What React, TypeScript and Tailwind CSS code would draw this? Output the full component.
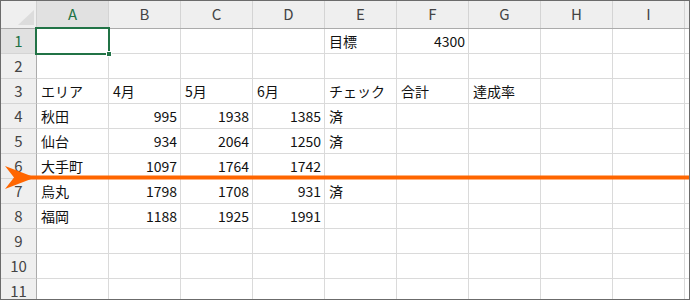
import React from "react";

const COLS = ["A", "B", "C", "D", "E", "F", "G", "H", "I"];

type Cell = { v: string; num?: boolean };

const DATA: Record<number, (Cell | null)[]> = {
  1: [null, null, null, null, { v: "目標" }, { v: "4300", num: true }],
  3: [{ v: "エリア" }, { v: "4月" }, { v: "5月" }, { v: "6月" }, { v: "チェック" }, { v: "合計" }, { v: "達成率" }],
  4: [{ v: "秋田" }, { v: "995", num: true }, { v: "1938", num: true }, { v: "1385", num: true }, { v: "済" }],
  5: [{ v: "仙台" }, { v: "934", num: true }, { v: "2064", num: true }, { v: "1250", num: true }, { v: "済" }],
  6: [{ v: "大手町" }, { v: "1097", num: true }, { v: "1764", num: true }, { v: "1742", num: true }],
  7: [{ v: "烏丸" }, { v: "1798", num: true }, { v: "1708", num: true }, { v: "931", num: true }, { v: "済" }],
  8: [{ v: "福岡" }, { v: "1188", num: true }, { v: "1925", num: true }, { v: "1991", num: true }],
};

const ROWS = [1, 2, 3, 4, 5, 6, 7, 8, 9, 10, 11];

function HeaderRow() {
  return (
    <div className="flex h-[28px] shrink-0 border-b border-[#ababab] bg-[#efefef]">
      <div className="relative w-[36px] shrink-0 border-r border-[#d0d0d0]">
        <svg className="absolute left-0 top-0" width="36" height="28">
          <polygon points="17,24 33,9 33,24" fill="#dcdcdc" />
        </svg>
      </div>
      {COLS.map((c, i) => (
        <div
          key={c}
          className={
            "w-[72px] shrink-0 flex items-center justify-center border-r border-[#d4d4d4] text-[15px] " +
            (i === 0 ? "bg-[#e1e1e1] text-[#217346]" : "text-[#444]")
          }
        >
          {c}
        </div>
      ))}
    </div>
  );
}

function Row({ n }: { n: number }) {
  const cells = DATA[n] ?? [];
  return (
    <div className="flex h-[25px] shrink-0">
      <div
        className={
          "w-[36px] shrink-0 flex items-center justify-center border-r border-[#ababab] border-b border-b-[#d4d4d4] text-[15px] " +
          (n === 1 ? "bg-[#e1e1e1] text-[#217346]" : "bg-[#efefef] text-[#444]")
        }
      >
        {n}
      </div>
      {COLS.map((c, i) => {
        const cell = cells[i];
        return (
          <div
            key={c}
            className={
              "w-[72px] shrink-0 flex items-center border-r border-b border-[#dadada] text-[14px] text-[#111] " +
              (cell?.num ? "justify-end pr-[3px]" : "justify-start pl-[4px]")
            }
          >
            {cell?.v}
          </div>
        );
      })}
      <div className="flex-1 border-b border-[#dadada]" />
    </div>
  );
}

export default function App() {
  return (
    <div
      className="relative w-[690px] h-[300px] overflow-hidden bg-white border border-[#6b6b6b] flex flex-col"
      style={{ fontFamily: '"Noto Sans CJK JP", "Liberation Sans", sans-serif' }}
    >
      <HeaderRow />
      {ROWS.map((n) => (
        <Row key={n} n={n} />
      ))}

      {/* active cell A1 */}
      <div className="absolute left-[34px] top-[26px] w-[75px] h-[28px] border-2 border-[#217346]" />
      <div className="absolute left-[105px] top-[50px] w-[6px] h-[6px] bg-[#217346] border border-white" />

      {/* orange arrow */}
      <svg className="absolute left-[-1px] top-[-1px]" width="690" height="300">
        <rect x="28" y="175.5" width="662" height="4" fill="#ff6600" />
        <polygon points="5,166 35,177.5 5,189 14,177.5" fill="#ff6600" />
      </svg>
    </div>
  );
}
